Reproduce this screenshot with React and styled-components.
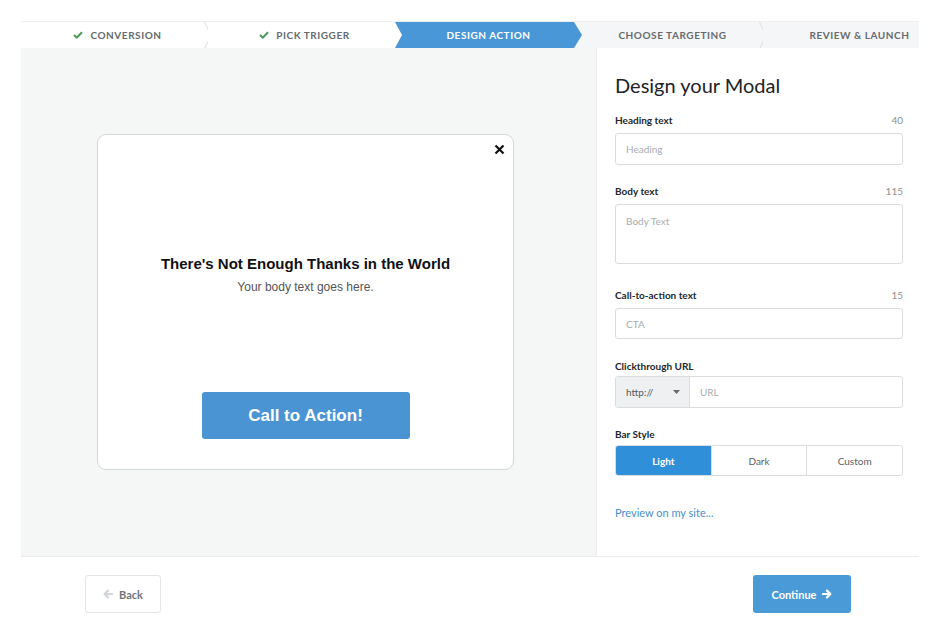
import React from 'react';
import styled, { createGlobalStyle } from 'styled-components';

const GlobalStyle = createGlobalStyle`
html, body {
  margin: 0;
  padding: 0;
  background: #fff;
  font-family: Lato, "Open Sans", sans-serif;
}
* { box-sizing: border-box; }
`;

const Page = styled.div`
width: 940px;
height: 635px;
padding: 21px 21px 0;
display: flex;
flex-direction: column;
`;

const Steps = styled.div`
display: flex;
height: 27px;
overflow: hidden;
background: linear-gradient(to right, #fff 50%, #f5f6f7 50%);
border-top: 1px solid #eceeef;
`;

const Step = styled.div`
position: relative;
flex: 0 0 187px;
display: flex;
align-items: center;
justify-content: center;
gap: 7px;
padding-left: 6px;
font-size: 10px;
font-weight: 700;
letter-spacing: 0.55px;
text-transform: uppercase;
color: ${p => (p.$active ? '#fff' : '#656b70')};
background: ${p => (p.$active ? '#4a97d7' : p.$done ? '#fff' : '#f5f6f7')};
clip-path: ${p =>
  p.$active
    ? 'polygon(0 0, calc(100% - 8px) 0, 100% 50%, calc(100% - 8px) 100%, 0 100%, 7px 50%)'
    : 'none'};
${p => (p.$active ? 'margin-right: -6px; padding-right: 6px; z-index: 1;' : '')}
`;

const Sep = styled.svg`
position: absolute;
right: -4px;
top: 0;
`;

const Main = styled.div`
display: flex;
height: 509px;
border-bottom: 1px solid #e9ebec;
`;

const Preview = styled.div`
flex: 0 0 575px;
background: #f5f6f6;
display: flex;
align-items: center;
justify-content: center;
padding-right: 6px;
`;

const Modal = styled.div`
position: relative;
width: 417px;
height: 336px;
background: #fff;
border: 1px solid #d4d7d9;
border-radius: 9px;
display: flex;
flex-direction: column;
align-items: center;
padding-top: 120px;
font-family: "Liberation Sans", Arial, sans-serif;
`;

const Close = styled.svg`
position: absolute;
top: 9px;
right: 8px;
`;

const ModalHeading = styled.h2`
margin: 0;
font-size: 15px;
line-height: 18px;
font-weight: 700;
color: #111;
`;

const ModalBody = styled.p`
margin: 6px 0 0;
font-size: 12px;
line-height: 16px;
color: #555;
`;

const CtaButton = styled.div`
margin-top: 97px;
width: 208px;
height: 47px;
border-radius: 3px;
background: #4b94d4;
color: #fff;
font-size: 17px;
font-weight: 700;
display: flex;
align-items: center;
justify-content: center;
`;

const Panel = styled.div`
flex: 1;
border-left: 1px solid #eceeef;
padding: 24px 16px 0 18px;
display: flex;
flex-direction: column;
`;

const Title = styled.h1`
margin: 0 0 16px;
font-size: 20px;
line-height: 26px;
font-weight: 400;
color: #1d2328;
`;

const Field = styled.div`
display: flex;
flex-direction: column;
margin-bottom: ${p => p.$mb ?? 20}px;
`;

const LabelRow = styled.div`
display: flex;
justify-content: space-between;
align-items: center;
height: 12px;
margin-bottom: ${p => p.$gap ?? 7}px;
`;

const Label = styled.span`
font-size: 10px;
font-weight: 700;
color: #22282d;
`;

const Count = styled.span`
font-size: 10px;
color: #8a8f93;
`;

const Input = styled.div`
height: ${p => p.$h ?? 32}px;
border: 1px solid #dadddf;
border-radius: 3px;
padding: ${p => (p.$multi ? '10px' : '0 10px')};
display: flex;
align-items: ${p => (p.$multi ? 'flex-start' : 'center')};
font-size: 10px;
color: #a9adb0;
background: #fff;
`;

const Group = styled.div`
display: flex;
height: 32px;
border: 1px solid #dadddf;
border-radius: 3px;
overflow: hidden;
`;

const SelectBox = styled.div`
flex: 0 0 74px;
background: #eef0f1;
border-right: 1px solid #dadddf;
display: flex;
align-items: center;
justify-content: space-between;
padding: 0 9px 0 10px;
font-size: 10px;
color: #555b60;
`;

const UrlInput = styled.div`
flex: 1;
display: flex;
align-items: center;
padding: 0 10px;
font-size: 10px;
color: #a9adb0;
`;

const Segments = styled.div`
display: flex;
height: 31px;
border: 1px solid #dadddf;
border-radius: 3px;
overflow: hidden;
`;

const Segment = styled.div`
flex: 1;
display: flex;
align-items: center;
justify-content: center;
font-size: 10px;
font-weight: ${p => (p.$active ? 700 : 400)};
color: ${p => (p.$active ? '#fff' : '#5b6166')};
background: ${p => (p.$active ? '#2f8fd8' : '#fff')};
& + & {
  border-left: 1px solid #dadddf;
}
`;

const PreviewLink = styled.a`
margin-top: 30px;
font-size: 11px;
color: #4a8fd0;
text-decoration: none;
`;

const Footer = styled.div`
display: flex;
justify-content: space-between;
align-items: flex-start;
padding: 18px 68px 0 64px;
`;

const BackButton = styled.div`
width: 76px;
height: 38px;
border: 1px solid #e3e5e7;
border-radius: 3px;
display: flex;
align-items: center;
justify-content: center;
gap: 6px;
font-size: 11px;
font-weight: 700;
color: #70767a;
`;

const ContinueButton = styled.div`
width: 98px;
height: 38px;
border-radius: 3px;
background: #4a9ad8;
display: flex;
align-items: center;
justify-content: center;
gap: 6px;
font-size: 11px;
font-weight: 700;
color: #fff;
`;

const Check = () => (
  <svg width="10" height="8" viewBox="0 0 10 8">
    <polyline points="1,4 3.8,6.6 9,1.2" fill="none" stroke="#4a9a5c" strokeWidth="2" />
  </svg>
);

const Chevron = () => (
  <Sep width="8" height="27" viewBox="0 0 8 27">
    <polyline points="0.5,0 7,13.5 0.5,27" fill="none" stroke="#dcdfe1" strokeWidth="1" />
  </Sep>
);

const Arrow = ({ dir = 'right', color }) => (
  <svg width="10" height="10" viewBox="0 0 10 10" style={{ transform: dir === 'left' ? 'scaleX(-1)' : 'none' }}>
    <path d="M1 5 H8 M5 1.6 L8.4 5 L5 8.4" fill="none" stroke={color} strokeWidth="2.2" strokeLinecap="round" strokeLinejoin="round" />
  </svg>
);

const steps = [
  { label: 'Conversion', done: true },
  { label: 'Pick trigger', done: true },
  { label: 'Design action', active: true },
  { label: 'Choose targeting' },
  { label: 'Review & launch' },
];

const App = () => {
  return (
    <Page>
      <GlobalStyle />
      <Steps>
        {steps.map((s, i) => (
          <Step key={s.label} $done={s.done} $active={s.active}>
            {s.done && <Check />}
            {s.label}
            {!s.active && i !== 1 && <Chevron />}
          </Step>
        ))}
      </Steps>
      <Main>
        <Preview>
          <Modal>
            <Close width="11" height="11" viewBox="0 0 11 11">
              <path d="M1.5 1.5 L9.5 9.5 M9.5 1.5 L1.5 9.5" stroke="#111" strokeWidth="2.2" />
            </Close>
            <ModalHeading>There's Not Enough Thanks in the World</ModalHeading>
            <ModalBody>Your body text goes here.</ModalBody>
            <CtaButton>Call to Action!</CtaButton>
          </Modal>
        </Preview>
        <Panel>
          <Title>Design your Modal</Title>
          <Field>
            <LabelRow>
              <Label>Heading text</Label>
              <Count>40</Count>
            </LabelRow>
            <Input>Heading</Input>
          </Field>
          <Field $mb={25}>
            <LabelRow>
              <Label>Body text</Label>
              <Count>115</Count>
            </LabelRow>
            <Input $multi $h={60}>Body Text</Input>
          </Field>
          <Field $mb={21}>
            <LabelRow>
              <Label>Call-to-action text</Label>
              <Count>15</Count>
            </LabelRow>
            <Input $h={31}>CTA</Input>
          </Field>
          <Field>
            <LabelRow $gap={4}>
              <Label>Clickthrough URL</Label>
            </LabelRow>
            <Group>
              <SelectBox>
                http://
                <svg width="7" height="4" viewBox="0 0 7 4">
                  <polygon points="0,0 7,0 3.5,4" fill="#666b70" />
                </svg>
              </SelectBox>
              <UrlInput>URL</UrlInput>
            </Group>
          </Field>
          <Field $mb={0}>
            <LabelRow $gap={5}>
              <Label>Bar Style</Label>
            </LabelRow>
            <Segments>
              <Segment $active>Light</Segment>
              <Segment>Dark</Segment>
              <Segment>Custom</Segment>
            </Segments>
          </Field>
          <PreviewLink>Preview on my site...</PreviewLink>
        </Panel>
      </Main>
      <Footer>
        <BackButton>
          <Arrow dir="left" color="#d3d6d8" />
          Back
        </BackButton>
        <ContinueButton>
          Continue
          <Arrow color="#fff" />
        </ContinueButton>
      </Footer>
    </Page>
  );
};

export default App;
